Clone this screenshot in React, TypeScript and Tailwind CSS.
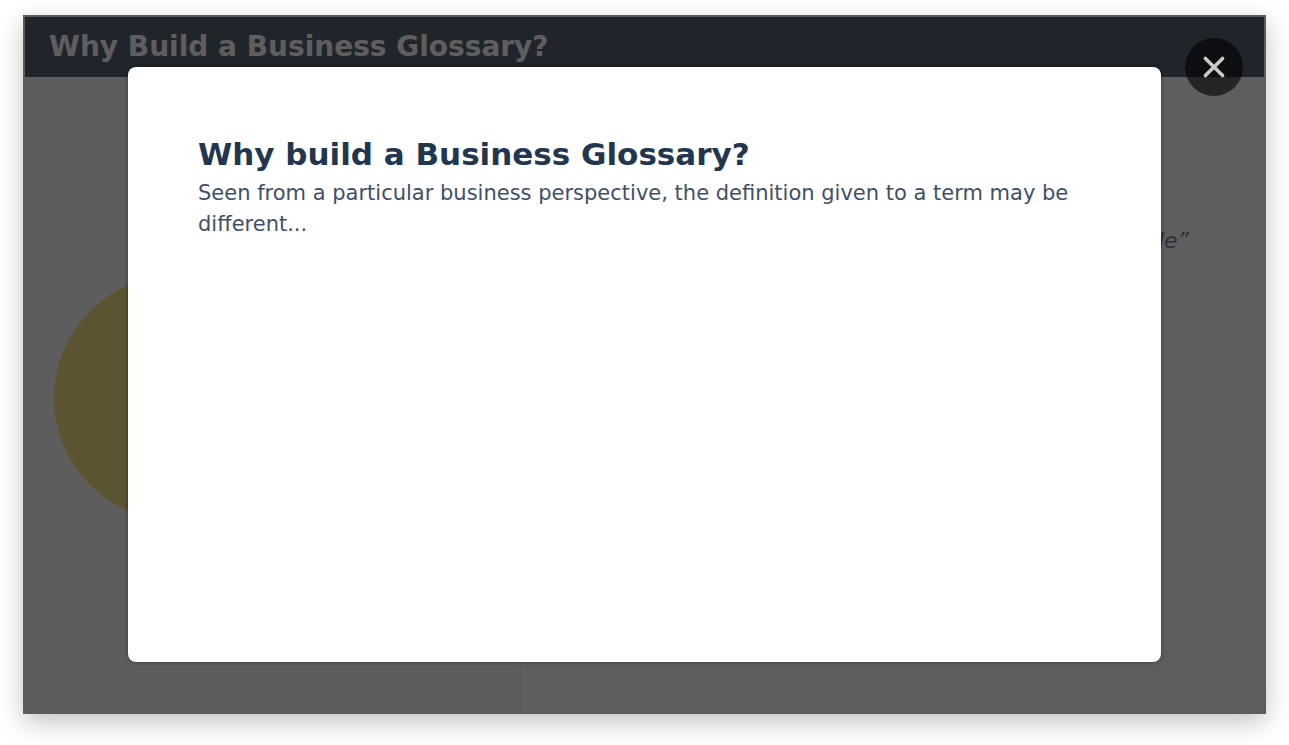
import { useState } from "react";

function Slide() {
  return (
    <div className="flex flex-1 flex-col border-2 border-[#f6f8f7] bg-white">
      <header className="flex h-[60px] items-center bg-[#566676] px-6">
        <h1 className="text-[28px] leading-8 font-bold text-white">
          Why Build a Business Glossary?
        </h1>
      </header>
      <div className="grid flex-1 grid-cols-[2fr_3fr]">
        <div className="flex items-center border-r-2 border-[#eeeeee] bg-[#fcfcfc] px-[29px] pt-1.5">
          <div className="size-[246px] rounded-full bg-[#f9e182]" />
        </div>
        <div className="flex items-start justify-end pt-36 pr-[75px]">
          <p className="text-[22px] leading-10 text-[#76869c] italic">de”</p>
        </div>
      </div>
    </div>
  );
}

export default function App() {
  const [open, setOpen] = useState(true);

  return (
    <main className="flex min-h-screen bg-white pt-[15px] pr-[23px] pb-[31px] pl-[23px] font-['DejaVu_Sans',Verdana,sans-serif]">
      <div className="relative flex flex-1 shadow-[0_8px_24px_rgba(0,0,0,0.24)]">
        <Slide />
        {open && (
          <div className="absolute inset-0 flex bg-black/63 px-[105px] py-[52px]">
            <section
              role="dialog"
              aria-labelledby="dialog-title"
              className="flex-1 rounded-lg bg-white px-[70px] py-[67px] shadow-[0_0_4px_rgba(0,0,0,0.4)]"
            >
              <h2 id="dialog-title" className="text-[31px] leading-10 font-bold text-[#22364f]">
                Why build a Business Glossary?
              </h2>
              <p className="pt-1 text-[21px] leading-[31px] text-[#3f5068]">
                Seen from a particular business perspective, the definition given to a term may be
                different...
              </p>
            </section>
            <button
              type="button"
              aria-label="Close"
              onClick={() => setOpen(false)}
              className="absolute top-[23px] right-[23px] flex size-[58px] items-center justify-center rounded-full bg-black/60"
            >
              <svg viewBox="0 0 24 24" className="size-6" stroke="#cacaca" strokeWidth="3.6" strokeLinecap="round">
                <path d="M3.4 3.4L20.6 20.6M20.6 3.4L3.4 20.6" />
              </svg>
            </button>
          </div>
        )}
      </div>
    </main>
  );
}
